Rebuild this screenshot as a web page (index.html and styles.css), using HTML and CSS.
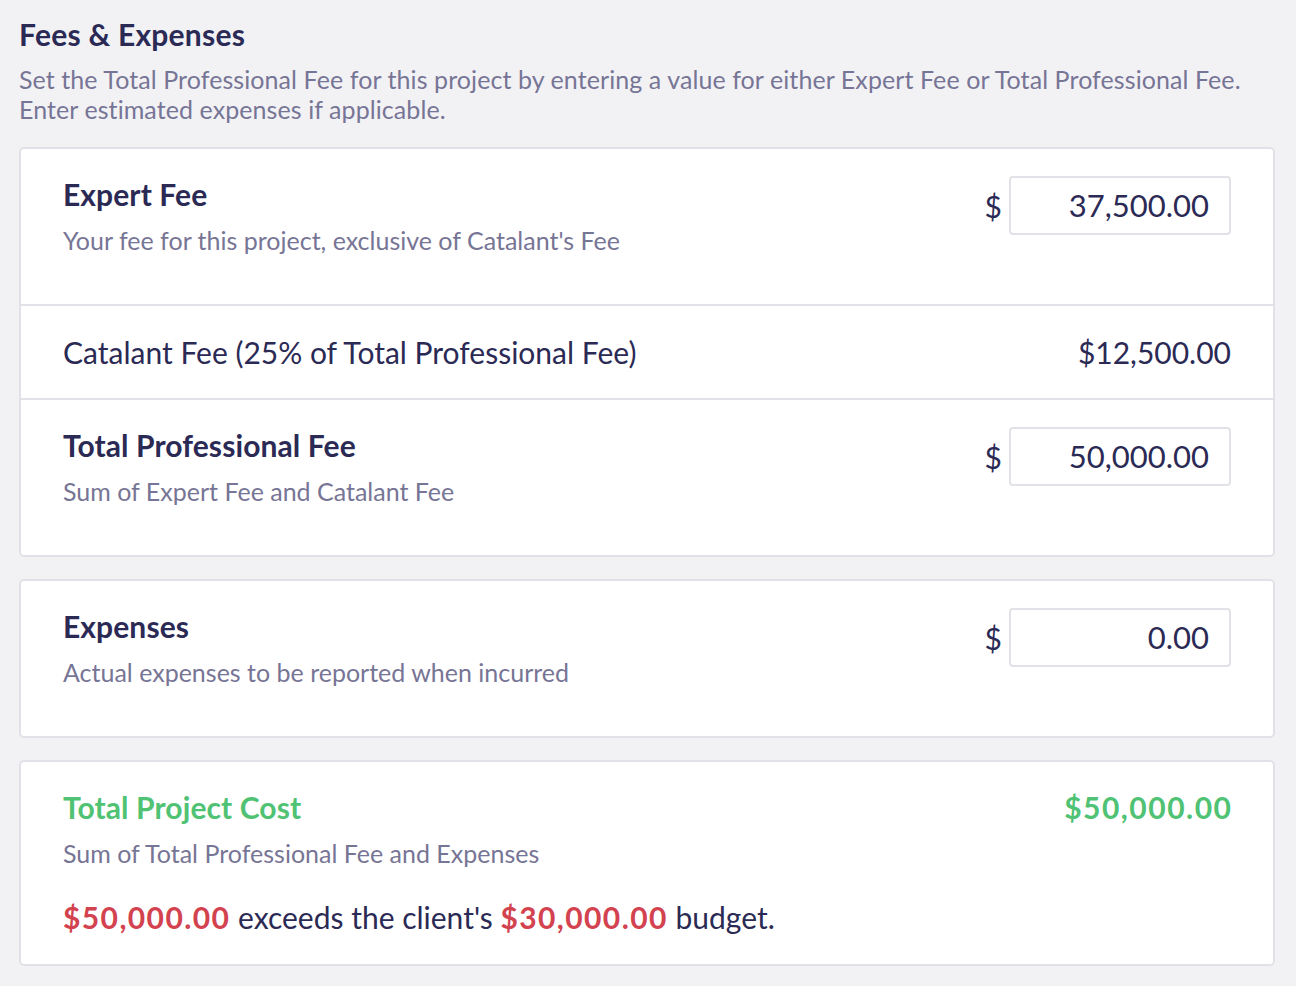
FILE: index.html
```html
<!DOCTYPE html>
<html>
<head>
<meta charset="utf-8">
<link rel="stylesheet" href="styles.css">
</head>
<body>
<div class="page">
  <h1 class="title">Fees &amp; Expenses</h1>
  <p class="intro">Set the Total Professional Fee for this project by entering a value for either Expert Fee or Total Professional Fee. Enter estimated expenses if applicable.</p>

  <section class="card">
    <div class="row row-tall">
      <div class="label">
        <div class="heading">Expert Fee</div>
        <div class="sub">Your fee for this project, exclusive of Catalant's Fee</div>
      </div>
      <div class="field"><span class="dollar">$</span><div class="input">37,500.00</div></div>
    </div>
    <div class="row row-short">
      <div class="plain">Catalant Fee (25% of Total Professional Fee)</div>
      <div class="plain">$12,500.00</div>
    </div>
    <div class="row row-tall">
      <div class="label">
        <div class="heading">Total Professional Fee</div>
        <div class="sub">Sum of Expert Fee and Catalant Fee</div>
      </div>
      <div class="field"><span class="dollar">$</span><div class="input">50,000.00</div></div>
    </div>
  </section>

  <section class="card">
    <div class="row row-tall">
      <div class="label">
        <div class="heading">Expenses</div>
        <div class="sub">Actual expenses to be reported when incurred</div>
      </div>
      <div class="field"><span class="dollar">$</span><div class="input">0.00</div></div>
    </div>
  </section>

  <section class="card">
    <div class="row row-total">
      <div class="label">
        <div class="heading green">Total Project Cost</div>
        <div class="sub">Sum of Total Professional Fee and Expenses</div>
        <div class="warn"><strong class="red">$50,000.00</strong> exceeds the client's <strong class="red">$30,000.00</strong> budget.</div>
      </div>
      <div class="heading green amount">$50,000.00</div>
    </div>
  </section>
</div>
</body>
</html>
```
FILE: styles.css
```css
html, body {
  margin: 0;
  padding: 0;
  background: #f2f2f5;
}
body {
  font-family: Lato, "Liberation Sans", sans-serif;
  color: #2b2a55;
}
.page {
  padding: 16px 21px 0 19px;
}
.title {
  margin: 0;
  font-size: 30px;
  font-weight: 700;
  line-height: 36px;
  letter-spacing: 0.25px;
  color: #2b2a55;
}
.intro {
  margin: 12px 0 23px;
  font-size: 25px;
  line-height: 30px;
  letter-spacing: 0.08px;
  color: #777595;
}
.card {
  background: #fff;
  border: 2px solid #e2e1e8;
  border-radius: 5px;
  margin-bottom: 22px;
}
.row {
  display: flex;
  justify-content: space-between;
  align-items: flex-start;
  padding: 0 42px;
}
.row + .row {
  border-top: 2px solid #e2e1e8;
}
.row-tall {
  height: 155px;
  padding-top: 27px;
  box-sizing: border-box;
}
.row + .row-tall {
  height: 157px;
}
.row-short {
  height: 94px;
  align-items: center;
  box-sizing: border-box;
}
.row-total {
  padding-top: 27px;
  padding-bottom: 29px;
}
.heading {
  font-size: 30px;
  font-weight: 700;
  line-height: 36px;
  letter-spacing: 0.1px;
}
.sub {
  font-size: 25px;
  line-height: 30px;
  color: #777595;
  margin-top: 13px;
}
.plain {
  font-size: 30px;
  line-height: 36px;
}
.field {
  display: flex;
  align-items: center;
}
.dollar {
  font-size: 30px;
  margin-right: 7px;
}
.input {
  width: 222px;
  height: 59px;
  box-sizing: border-box;
  border: 2px solid #e2e1e8;
  border-radius: 4px;
  text-align: right;
  padding-right: 20px;
  font-size: 31px;
  line-height: 55px;
}
.green { color: #50c274; }
.amount { letter-spacing: 1.5px; margin-right: -1.5px; }
.red { color: #d3424f; font-weight: 700; letter-spacing: 1.4px; }
.warn {
  margin-top: 31px;
  font-size: 30px;
  line-height: 36px;
}
```
